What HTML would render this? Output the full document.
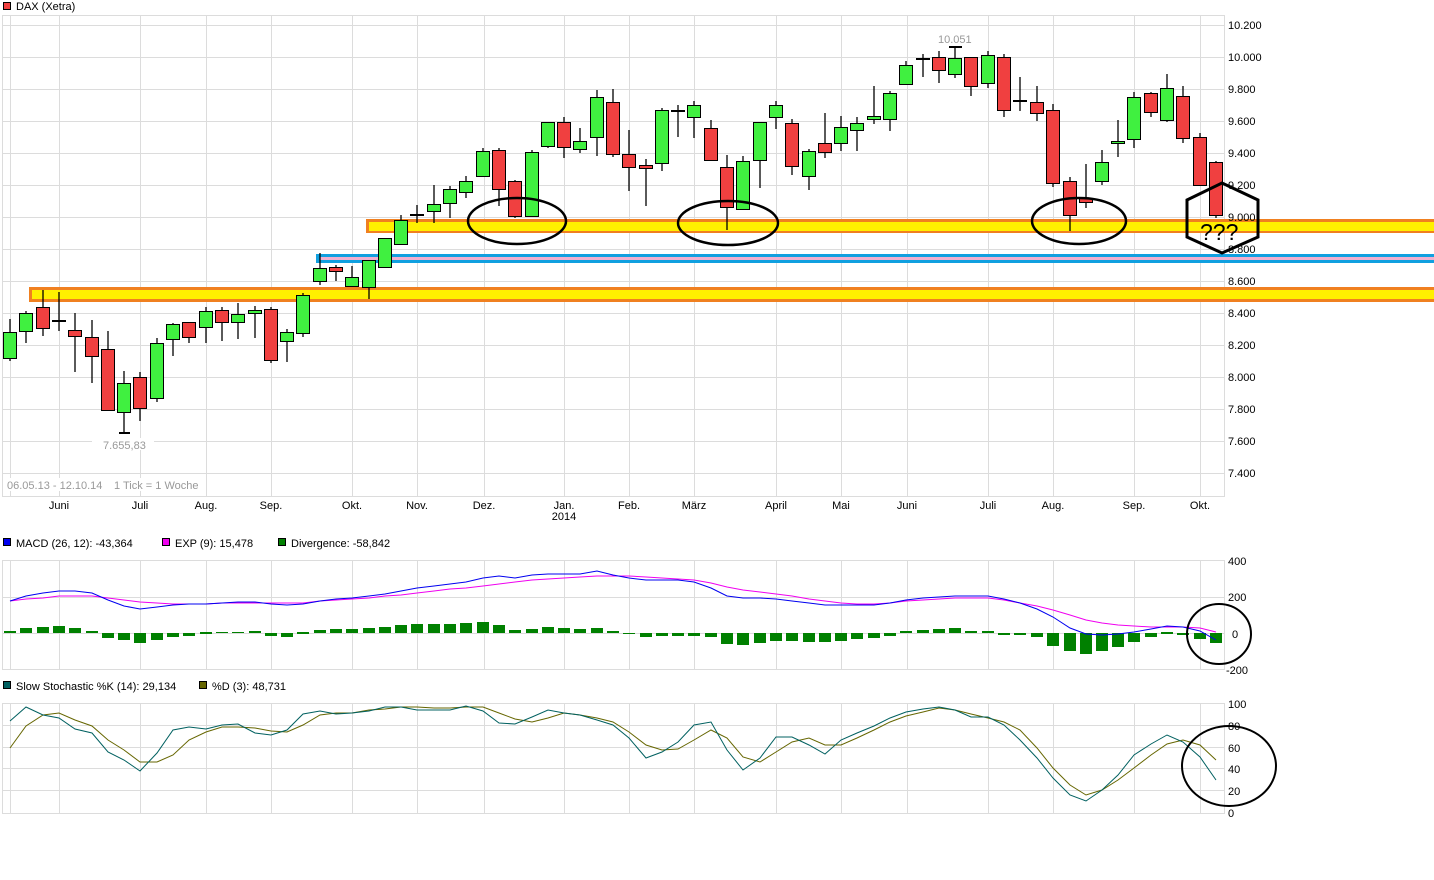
<!DOCTYPE html>
<html><head><meta charset="utf-8"><style>
html,body{margin:0;padding:0;background:#fff;width:1434px;height:880px;overflow:hidden}
svg{display:block}
text{font-family:"Liberation Sans",Arial,sans-serif;font-size:11px;fill:#000}
.gr{stroke:#dcdcdc;stroke-width:1;fill:none}
.w{stroke:#000;stroke-width:1.3;fill:none}
.g{fill:#40f040;stroke:#000;stroke-width:1}
.r{fill:#f04040;stroke:#000;stroke-width:1}
.d{stroke:#000;stroke-width:2}
.gy{fill:#999}
</style></head><body>
<svg width="1434" height="880" viewBox="0 0 1434 880" xmlns="http://www.w3.org/2000/svg">
<rect x="3.5" y="2.5" width="7" height="7" fill="#f04040" stroke="#000"/>
<text x="16" y="10">DAX (Xetra)</text>
<path class="gr" d="M2.5 15.5H1224.5V496.5H2.5Z M2.5 25.5H1224 M2.5 57.5H1224 M2.5 89.5H1224 M2.5 121.5H1224 M2.5 153.5H1224 M2.5 185.5H1224 M2.5 217.5H1224 M2.5 249.5H1224 M2.5 281.5H1224 M2.5 313.5H1224 M2.5 345.5H1224 M2.5 377.5H1224 M2.5 409.5H1224 M2.5 441.5H1224 M2.5 473.5H1224
M10.5 15V496 M59.5 15V496 M140.5 15V496 M206.5 15V496 M271.5 15V496 M352.5 15V496 M417.5 15V496 M484.5 15V496 M564.5 15V496 M629.5 15V496 M694.5 15V496 M776.5 15V496 M841.5 15V496 M907.5 15V496 M988.5 15V496 M1053.5 15V496 M1134.5 15V496 M1200.5 15V496"/>
<rect x="366" y="219" width="1068" height="14" fill="#f08020"/>
<rect x="369" y="222" width="1065" height="9" fill="#fff000"/>
<rect x="316" y="254" width="1118" height="9" fill="#10a0e0"/>
<rect x="320" y="257" width="1114" height="3" fill="#f0b0d0"/>
<rect x="29" y="287" width="1405" height="15" fill="#f08020"/>
<rect x="32" y="290" width="1402" height="9" fill="#fff000"/>
<g>
<path class="w" d="M10 319V361"/><rect class="g" x="3.5" y="332.5" width="13" height="26"/>
<path class="w" d="M26 311V343"/><rect class="g" x="19.5" y="313.5" width="13" height="18"/>
<path class="w" d="M43 290V336"/><rect class="r" x="36.5" y="307.5" width="13" height="21"/>
<path class="w" d="M59 292V331"/><path class="d" d="M52 321H66"/>
<path class="w" d="M75 313V372"/><rect class="r" x="68.5" y="330.5" width="13" height="6"/>
<path class="w" d="M92 320V383"/><rect class="r" x="85.5" y="337.5" width="13" height="19"/>
<path class="w" d="M108 331V410"/><rect class="r" x="101.5" y="349.5" width="13" height="61"/>
<path class="w" d="M124 371V433"/><path class="d" d="M119 433H130"/><rect class="g" x="117.5" y="383.5" width="13" height="29"/>
<path class="w" d="M140 372V421"/><rect class="r" x="133.5" y="377.5" width="13" height="31"/>
<path class="w" d="M157 338V402"/><rect class="g" x="150.5" y="343.5" width="13" height="55"/>
<path class="w" d="M173 323V356"/><rect class="g" x="166.5" y="324.5" width="13" height="15"/>
<path class="w" d="M189 322V343"/><rect class="r" x="182.5" y="322.5" width="13" height="15"/>
<path class="w" d="M206 307V343"/><rect class="g" x="199.5" y="311.5" width="13" height="16"/>
<path class="w" d="M222 307V341"/><rect class="r" x="215.5" y="310.5" width="13" height="12"/>
<path class="w" d="M238 303V339"/><rect class="g" x="231.5" y="314.5" width="13" height="8"/>
<path class="w" d="M255 306V338"/><rect class="g" x="248.5" y="310.5" width="13" height="3"/>
<path class="w" d="M271 307V363"/><rect class="r" x="264.5" y="309.5" width="13" height="51"/>
<path class="w" d="M287 329V362"/><rect class="g" x="280.5" y="332.5" width="13" height="9"/>
<path class="w" d="M303 293V337"/><rect class="g" x="296.5" y="295.5" width="13" height="38"/>
<path class="w" d="M320 253V285"/><rect class="g" x="313.5" y="268.5" width="13" height="13"/>
<path class="w" d="M336 265V281"/><rect class="r" x="329.5" y="267.5" width="13" height="4"/>
<path class="w" d="M352 266V286"/><rect class="g" x="345.5" y="277.5" width="13" height="9"/>
<path class="w" d="M369 260V299"/><rect class="g" x="362.5" y="260.5" width="13" height="27"/>
<path class="w" d="M385 238V268"/><rect class="g" x="378.5" y="238.5" width="13" height="29"/>
<path class="w" d="M401 215V244"/><rect class="g" x="394.5" y="220.5" width="13" height="24"/>
<path class="w" d="M417 205V223"/><path class="d" d="M410 215H424"/>
<path class="w" d="M434 185V223"/><rect class="g" x="427.5" y="204.5" width="13" height="7"/>
<path class="w" d="M450 186V218"/><rect class="g" x="443.5" y="189.5" width="13" height="14"/>
<path class="w" d="M466 176V198"/><rect class="g" x="459.5" y="181.5" width="13" height="11"/>
<path class="w" d="M483 148V176"/><rect class="g" x="476.5" y="151.5" width="13" height="25"/>
<path class="w" d="M499 148V206"/><rect class="r" x="492.5" y="150.5" width="13" height="39"/>
<path class="w" d="M515 180V218"/><rect class="r" x="508.5" y="181.5" width="13" height="35"/>
<path class="w" d="M532 150V216"/><rect class="g" x="525.5" y="152.5" width="13" height="64"/>
<path class="w" d="M548 122V148"/><rect class="g" x="541.5" y="122.5" width="13" height="24"/>
<path class="w" d="M564 117V158"/><rect class="r" x="557.5" y="122.5" width="13" height="25"/>
<path class="w" d="M580 128V153"/><rect class="g" x="573.5" y="141.5" width="13" height="8"/>
<path class="w" d="M597 90V156"/><rect class="g" x="590.5" y="97.5" width="13" height="40"/>
<path class="w" d="M613 89V157"/><rect class="r" x="606.5" y="102.5" width="13" height="52"/>
<path class="w" d="M629 130V191"/><rect class="r" x="622.5" y="154.5" width="13" height="13"/>
<path class="w" d="M646 159V206"/><rect class="r" x="639.5" y="165.5" width="13" height="3"/>
<path class="w" d="M662 108V171"/><rect class="g" x="655.5" y="110.5" width="13" height="53"/>
<path class="w" d="M678 105V137"/><path class="d" d="M671 111H685"/>
<path class="w" d="M694 101V138"/><rect class="g" x="687.5" y="105.5" width="13" height="12"/>
<path class="w" d="M711 120V161"/><rect class="r" x="704.5" y="128.5" width="13" height="32"/>
<path class="w" d="M727 155V230"/><rect class="r" x="720.5" y="167.5" width="13" height="40"/>
<path class="w" d="M743 156V209"/><rect class="g" x="736.5" y="161.5" width="13" height="48"/>
<path class="w" d="M760 122V188"/><rect class="g" x="753.5" y="122.5" width="13" height="38"/>
<path class="w" d="M776 101V129"/><rect class="g" x="769.5" y="105.5" width="13" height="12"/>
<path class="w" d="M792 119V175"/><rect class="r" x="785.5" y="123.5" width="13" height="43"/>
<path class="w" d="M809 149V190"/><rect class="g" x="802.5" y="151.5" width="13" height="25"/>
<path class="w" d="M825 113V158"/><rect class="r" x="818.5" y="143.5" width="13" height="9"/>
<path class="w" d="M841 116V151"/><rect class="g" x="834.5" y="127.5" width="13" height="16"/>
<path class="w" d="M857 117V151"/><rect class="g" x="850.5" y="123.5" width="13" height="7"/>
<path class="w" d="M874 86V124"/><rect class="g" x="867.5" y="116.5" width="13" height="3"/>
<path class="w" d="M890 91V131"/><rect class="g" x="883.5" y="93.5" width="13" height="26"/>
<path class="w" d="M906 61V85"/><rect class="g" x="899.5" y="65.5" width="13" height="19"/>
<path class="w" d="M923 54V77"/><path class="d" d="M916 59H930"/>
<path class="w" d="M939 51V83"/><rect class="r" x="932.5" y="57.5" width="13" height="13"/>
<path class="w" d="M955 47V78"/><path class="d" d="M949 47H962"/><rect class="g" x="948.5" y="58.5" width="13" height="16"/>
<path class="w" d="M971 57V96"/><rect class="r" x="964.5" y="57.5" width="13" height="29"/>
<path class="w" d="M988 51V88"/><rect class="g" x="981.5" y="55.5" width="13" height="28"/>
<path class="w" d="M1004 54V117"/><rect class="r" x="997.5" y="57.5" width="13" height="53"/>
<path class="w" d="M1020 77V111"/><path class="d" d="M1013 101H1027"/>
<path class="w" d="M1037 86V121"/><rect class="r" x="1030.5" y="102.5" width="13" height="11"/>
<path class="w" d="M1053 104V187"/><rect class="r" x="1046.5" y="110.5" width="13" height="73"/>
<path class="w" d="M1070 177V231"/><rect class="r" x="1063.5" y="181.5" width="13" height="34"/>
<path class="w" d="M1086 164V208"/><rect class="r" x="1079.5" y="198.5" width="13" height="4"/>
<path class="w" d="M1102 150V185"/><rect class="g" x="1095.5" y="162.5" width="13" height="19"/>
<path class="w" d="M1118 120V157"/><rect class="g" x="1111.5" y="141.5" width="13" height="2"/>
<path class="w" d="M1134 92V148"/><rect class="g" x="1127.5" y="97.5" width="13" height="42"/>
<path class="w" d="M1151 92V117"/><rect class="r" x="1144.5" y="93.5" width="13" height="19"/>
<path class="w" d="M1167 74V122"/><rect class="g" x="1160.5" y="88.5" width="13" height="32"/>
<path class="w" d="M1183 86V143"/><rect class="r" x="1176.5" y="96.5" width="13" height="42"/>
<path class="w" d="M1200 133V185"/><rect class="r" x="1193.5" y="137.5" width="13" height="48"/>
<path class="w" d="M1216 161V218"/><rect class="r" x="1209.5" y="162.5" width="13" height="53"/>
</g>
<g fill="none" stroke="#000" stroke-width="2.5">
<ellipse cx="517" cy="221" rx="49" ry="23"/>
<ellipse cx="728" cy="223" rx="50" ry="22"/>
<ellipse cx="1079" cy="221" rx="47" ry="23"/>
<path d="M1222 183L1258 200V237L1222 253L1187 237V200Z" stroke-width="3"/>
</g>
<text x="1200" y="240" style="font-size:23px">???</text>
<g>
<text x="1228" y="29">10.200</text><text x="1228" y="61">10.000</text><text x="1228" y="93">9.800</text><text x="1228" y="125">9.600</text><text x="1228" y="157">9.400</text><text x="1228" y="189">9.200</text><text x="1228" y="221">9.000</text><text x="1228" y="253">8.800</text><text x="1228" y="285">8.600</text><text x="1228" y="317">8.400</text><text x="1228" y="349">8.200</text><text x="1228" y="381">8.000</text><text x="1228" y="413">7.800</text><text x="1228" y="445">7.600</text><text x="1228" y="477">7.400</text>
</g>
<text x="938" y="43" class="gy">10.051</text>
<rect x="92" y="438" width="62" height="12" fill="#fff"/>
<text x="103" y="449" class="gy">7.655,83</text>
<rect x="4" y="478" width="190" height="13" fill="#fff"/>
<text x="7" y="489" class="gy">06.05.13 - 12.10.14</text>
<text x="114" y="489" class="gy">1 Tick = 1 Woche</text>
<g text-anchor="middle">
<text x="59" y="509">Juni</text><text x="140" y="509">Juli</text><text x="206" y="509">Aug.</text><text x="271" y="509">Sep.</text><text x="352" y="509">Okt.</text><text x="417" y="509">Nov.</text><text x="484" y="509">Dez.</text><text x="564" y="509">Jan.</text><text x="564" y="520">2014</text><text x="629" y="509">Feb.</text><text x="694" y="509">März</text><text x="776" y="509">April</text><text x="841" y="509">Mai</text><text x="907" y="509">Juni</text><text x="988" y="509">Juli</text><text x="1053" y="509">Aug.</text><text x="1134" y="509">Sep.</text><text x="1200" y="509">Okt.</text>
</g>
<rect x="3.5" y="538.5" width="7" height="7" fill="#0000f0" stroke="#000"/><text x="16" y="547">MACD (26, 12): -43,364</text>
<rect x="162.5" y="538.5" width="7" height="7" fill="#f000f0" stroke="#000"/><text x="175" y="547">EXP (9): 15,478</text>
<rect x="278.5" y="538.5" width="7" height="7" fill="#008000" stroke="#000"/><text x="291" y="547">Divergence: -58,842</text>
<path class="gr" d="M2.5 560.5H1224.5V669.5H2.5Z M2.5 597.5H1224 M2.5 633.5H1224
M10.5 560V669 M59.5 560V669 M140.5 560V669 M206.5 560V669 M271.5 560V669 M352.5 560V669 M417.5 560V669 M484.5 560V669 M564.5 560V669 M629.5 560V669 M694.5 560V669 M776.5 560V669 M841.5 560V669 M907.5 560V669 M988.5 560V669 M1053.5 560V669 M1134.5 560V669 M1200.5 560V669"/>
<text x="1228" y="565">400</text><text x="1228" y="601">200</text><text x="1232" y="638">0</text><text x="1226" y="674">-200</text>
<g fill="#008000">
<rect x="4" y="631" width="12" height="2"/><rect x="20" y="628" width="12" height="5"/><rect x="37" y="627" width="12" height="6"/><rect x="53" y="626" width="12" height="7"/><rect x="69" y="628" width="12" height="5"/><rect x="86" y="631" width="12" height="2"/><rect x="102" y="633" width="12" height="5"/><rect x="118" y="633" width="12" height="7"/><rect x="134" y="633" width="12" height="10"/><rect x="151" y="633" width="12" height="7"/><rect x="167" y="633" width="12" height="4"/><rect x="183" y="633" width="12" height="3"/><rect x="200" y="632" width="12" height="2"/><rect x="216" y="632" width="12" height="1"/><rect x="232" y="632" width="12" height="1"/><rect x="249" y="631" width="12" height="2"/><rect x="265" y="633" width="12" height="3"/><rect x="281" y="633" width="12" height="4"/><rect x="297" y="632" width="12" height="2"/><rect x="314" y="630" width="12" height="3"/><rect x="330" y="629" width="12" height="4"/><rect x="346" y="629" width="12" height="4"/><rect x="363" y="628" width="12" height="5"/><rect x="379" y="627" width="12" height="6"/><rect x="395" y="625" width="12" height="8"/><rect x="411" y="624" width="12" height="9"/><rect x="428" y="624" width="12" height="9"/><rect x="444" y="624" width="12" height="9"/><rect x="460" y="623" width="12" height="10"/><rect x="477" y="622" width="12" height="11"/><rect x="493" y="625" width="12" height="8"/><rect x="509" y="630" width="12" height="3"/><rect x="526" y="629" width="12" height="4"/><rect x="542" y="627" width="12" height="6"/><rect x="558" y="628" width="12" height="5"/><rect x="574" y="629" width="12" height="4"/><rect x="591" y="628" width="12" height="5"/><rect x="607" y="631" width="12" height="2"/><rect x="623" y="633" width="12" height="1"/><rect x="640" y="633" width="12" height="4"/><rect x="656" y="633" width="12" height="3"/><rect x="672" y="633" width="12" height="3"/><rect x="688" y="633" width="12" height="3"/><rect x="705" y="633" width="12" height="4"/><rect x="721" y="633" width="12" height="11"/><rect x="737" y="633" width="12" height="12"/><rect x="754" y="633" width="12" height="10"/><rect x="770" y="633" width="12" height="8"/><rect x="786" y="633" width="12" height="8"/><rect x="803" y="633" width="12" height="9"/><rect x="819" y="633" width="12" height="9"/><rect x="835" y="633" width="12" height="8"/><rect x="851" y="633" width="12" height="6"/><rect x="868" y="633" width="12" height="5"/><rect x="884" y="633" width="12" height="3"/><rect x="900" y="631" width="12" height="2"/><rect x="917" y="630" width="12" height="3"/><rect x="933" y="629" width="12" height="4"/><rect x="949" y="628" width="12" height="5"/><rect x="965" y="631" width="12" height="2"/><rect x="982" y="631" width="12" height="2"/><rect x="998" y="633" width="12" height="2"/><rect x="1014" y="633" width="12" height="2"/><rect x="1031" y="633" width="12" height="4"/><rect x="1047" y="633" width="12" height="13"/><rect x="1064" y="633" width="12" height="18"/><rect x="1080" y="633" width="12" height="21"/><rect x="1096" y="633" width="12" height="18"/><rect x="1112" y="633" width="12" height="14"/><rect x="1128" y="633" width="12" height="9"/><rect x="1145" y="633" width="12" height="4"/><rect x="1161" y="632" width="12" height="2"/><rect x="1177" y="633" width="12" height="2"/><rect x="1194" y="633" width="12" height="6"/><rect x="1210" y="633" width="12" height="10"/>
</g>
<polyline fill="none" stroke="#f000f0" stroke-width="1" points="10,601 26,599 43,598 59,596 75,596 92,596 108,598 124,600 140,602 157,603 173,604 189,604 206,604 222,603 238,603 255,603 271,603 287,603 303,603 320,601 336,600 352,599 369,598 385,596 401,595 417,593 434,591 450,589 466,588 483,586 499,584 515,582 532,580 548,579 564,578 580,577 597,576 613,576 629,576 646,577 662,578 678,579 694,580 711,583 727,587 743,590 760,592 776,594 792,596 809,599 825,601 841,603 857,604 874,604 890,603 906,601 923,600 939,599 955,598 971,598 988,598 1004,600 1020,603 1037,606 1053,610 1070,615 1086,620 1102,623 1118,625 1134,626 1151,627 1167,627 1183,627 1200,628 1216,632"/>
<polyline fill="none" stroke="#0000f0" stroke-width="1" points="10,601 26,596 43,593 59,591 75,591 92,593 108,600 124,606 140,609 157,607 173,605 189,604 206,604 222,603 238,602 255,602 271,604 287,605 303,604 320,601 336,599 352,598 369,596 385,594 401,591 417,588 434,586 450,584 466,582 483,578 499,576 515,578 532,575 548,574 564,574 580,574 597,571 613,575 629,578 646,580 662,580 678,580 694,582 711,588 727,596 743,598 760,598 776,599 792,601 809,603 825,605 841,605 857,605 874,605 890,603 906,600 923,598 939,597 955,596 971,596 988,596 1004,599 1020,603 1037,609 1053,617 1070,628 1086,634 1102,635 1118,634 1134,632 1151,629 1167,626 1183,627 1200,631 1216,640"/>
<ellipse cx="1219" cy="634" rx="32" ry="30" fill="none" stroke="#000" stroke-width="2"/>
<rect x="3.5" y="681.5" width="7" height="7" fill="#006060" stroke="#000"/><text x="16" y="690">Slow Stochastic %K (14): 29,134</text>
<rect x="199.5" y="681.5" width="7" height="7" fill="#666600" stroke="#000"/><text x="212" y="690">%D (3): 48,731</text>
<path class="gr" d="M2.5 703.5H1224.5V813.5H2.5Z M2.5 725.5H1224 M2.5 747.5H1224 M2.5 768.5H1224 M2.5 790.5H1224
M10.5 703V813 M59.5 703V813 M140.5 703V813 M206.5 703V813 M271.5 703V813 M352.5 703V813 M417.5 703V813 M484.5 703V813 M564.5 703V813 M629.5 703V813 M694.5 703V813 M776.5 703V813 M841.5 703V813 M907.5 703V813 M988.5 703V813 M1053.5 703V813 M1134.5 703V813 M1200.5 703V813"/>
<text x="1228" y="708">100</text><text x="1228" y="730">80</text><text x="1228" y="752">60</text><text x="1228" y="773">40</text><text x="1228" y="795">20</text><text x="1228" y="817">0</text>
<polyline fill="none" stroke="#666600" stroke-width="1" points="10,748 26,726 43,715 59,713 75,720 92,726 108,740 124,750 140,762 157,762 173,755 189,740 206,732 222,727 238,727 255,728 271,731 287,732 303,725 320,715 336,713 352,713 369,710 385,709 401,707 417,707 434,708 450,708 466,707 483,707 499,713 515,719 532,722 548,718 564,713 580,715 597,718 613,722 629,732 646,745 662,750 678,749 694,740 711,730 727,738 743,757 760,762 776,752 792,742 809,738 825,745 841,745 857,738 874,730 890,722 906,716 923,712 939,708 955,710 971,714 988,718 1004,722 1020,730 1037,748 1053,768 1070,785 1086,795 1102,790 1118,780 1134,768 1151,755 1167,744 1183,740 1200,745 1216,760"/>
<polyline fill="none" stroke="#006060" stroke-width="1" points="10,721 26,707 43,715 59,718 75,729 92,733 108,752 124,760 140,771 157,753 173,730 189,727 206,729 222,725 238,724 255,733 271,735 287,730 303,714 320,711 336,714 352,713 369,711 385,707 401,707 417,710 434,710 450,710 466,706 483,711 499,723 515,724 532,717 548,710 564,713 580,715 597,720 613,725 629,738 646,758 662,752 678,742 694,725 711,722 727,750 743,770 760,758 776,737 792,737 809,745 825,754 841,740 857,733 874,726 890,718 906,712 923,709 939,707 955,710 971,717 988,717 1004,725 1020,740 1037,758 1053,778 1070,795 1086,801 1102,790 1118,775 1134,755 1151,744 1167,735 1183,742 1200,757 1216,780"/>
<ellipse cx="1229" cy="766" rx="47" ry="40" fill="none" stroke="#000" stroke-width="2"/>
</svg>
</body></html>
